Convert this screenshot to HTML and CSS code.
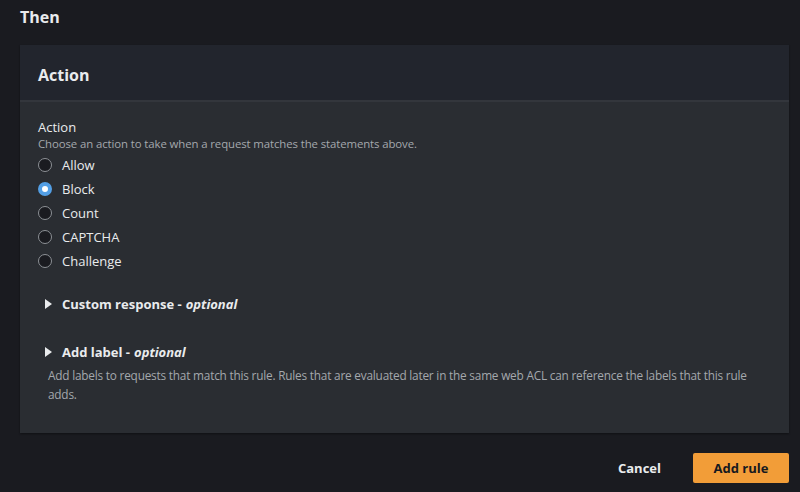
FILE: index.html
```html
<!DOCTYPE html>
<html>
<head>
<meta charset="utf-8">
<link rel="stylesheet" href="styles.css">
</head>
<body>
<div class="page">
  <h2 class="then">Then</h2>
  <div class="card">
    <div class="card-header"><h3>Action</h3></div>
    <div class="card-body">
      <div class="field-label">Action</div>
      <div class="field-desc">Choose an action to take when a request matches the statements above.</div>
      <div class="radios">
        <label class="radio"><span class="circle"></span>Allow</label>
        <label class="radio"><span class="circle checked"></span>Block</label>
        <label class="radio"><span class="circle"></span>Count</label>
        <label class="radio"><span class="circle"></span>CAPTCHA</label>
        <label class="radio"><span class="circle"></span>Challenge</label>
      </div>
      <div class="expander first">
        <div class="exp-head"><span class="tri"></span>Custom response - <em>optional</em></div>
      </div>
      <div class="expander second">
        <div class="exp-head"><span class="tri"></span>Add label - <em>optional</em></div>
        <div class="exp-desc">Add labels to requests that match this rule. Rules that are evaluated later in the same web ACL can reference the labels that this rule adds.</div>
      </div>
    </div>
  </div>
  <div class="actions">
    <button class="btn-link">Cancel</button>
    <button class="btn-primary">Add rule</button>
  </div>
</div>
</body>
</html>
```

FILE: styles.css
```css
html, body {
  margin: 0;
  padding: 0;
  background: #1a1b20;
}
body {
  font-family: "Open Sans", "Noto Sans", sans-serif;
  color: #e9ebed;
  width: 800px;
  height: 492px;
  overflow: hidden;
}
.page {
  padding: 0 11px 0 20px;
}
.then {
  margin: 0;
  padding-top: 5px;
  height: 40px;
  font-size: 16px;
  font-weight: 700;
  line-height: 24px;
  color: #e9ebed;
}
.card {
  background: #2a2d32;
  box-shadow: 0 1px 2px rgba(0,0,0,0.4);
}
.card-header {
  background: #22252d;
  height: 55px;
  border-bottom: 2px solid #33363c;
  display: flex;
  align-items: center;
  padding-left: 18px;
}
.card-header h3 {
  margin: 0;
  font-size: 16px;
  font-weight: 700;
  color: #e9ebed;
  padding-top: 4px;
}
.card-body {
  padding: 16px 18px 29px 18px;
}
.field-label {
  font-size: 13px;
  line-height: 18px;
  color: #e9ebed;
}
.field-desc {
  font-size: 11.4px;
  line-height: 16px;
  color: #a4a8ad;
  letter-spacing: -0.1px;
}
.radios {
  display: flex;
  flex-direction: column;
  margin-top: 1px;
}
.radio {
  display: flex;
  align-items: center;
  height: 24px;
  font-size: 13px;
  color: #e9ebed;
}
.circle {
  box-sizing: border-box;
  width: 14px;
  height: 14px;
  border-radius: 50%;
  border: 1.5px solid #8d9196;
  background: #1a1b20;
  margin-right: 10px;
}
.circle.checked {
  border: 4px solid #539fe5;
  background: #ffffff;
}
.expander.first {
  margin-top: 21px;
}
.expander.second {
  margin-top: 28px;
}
.exp-head {
  display: flex;
  align-items: center;
  font-size: 13px;
  font-weight: 700;
  color: #e9ebed;
  height: 20px;
  padding-left: 7px;
}
.exp-head em {
  font-style: italic;
  font-weight: 700;
  margin-left: 4px;
}
.tri {
  width: 0;
  height: 0;
  border-top: 5px solid transparent;
  border-bottom: 5px solid transparent;
  border-left: 7px solid #e9ebed;
  margin-right: 10px;
}
.exp-desc {
  padding-left: 10px;
  margin-top: 4px;
  font-size: 11.8px;
  line-height: 19px;
  color: #a4a8ad;
  letter-spacing: -0.2px;
  padding-right: 0;
}
.actions {
  display: flex;
  justify-content: flex-end;
  align-items: center;
  margin-top: 20px;
  gap: 22px;
}
.btn-link {
  background: none;
  border: none;
  font-family: inherit;
  font-size: 13px;
  font-weight: 700;
  color: #e9ebed;
  padding: 0 10px;
}
.btn-primary {
  background: #f29d38;
  border: none;
  border-radius: 2px;
  width: 96px;
  height: 30px;
  font-family: inherit;
  font-size: 13px;
  font-weight: 700;
  color: #16191f;
}
```
